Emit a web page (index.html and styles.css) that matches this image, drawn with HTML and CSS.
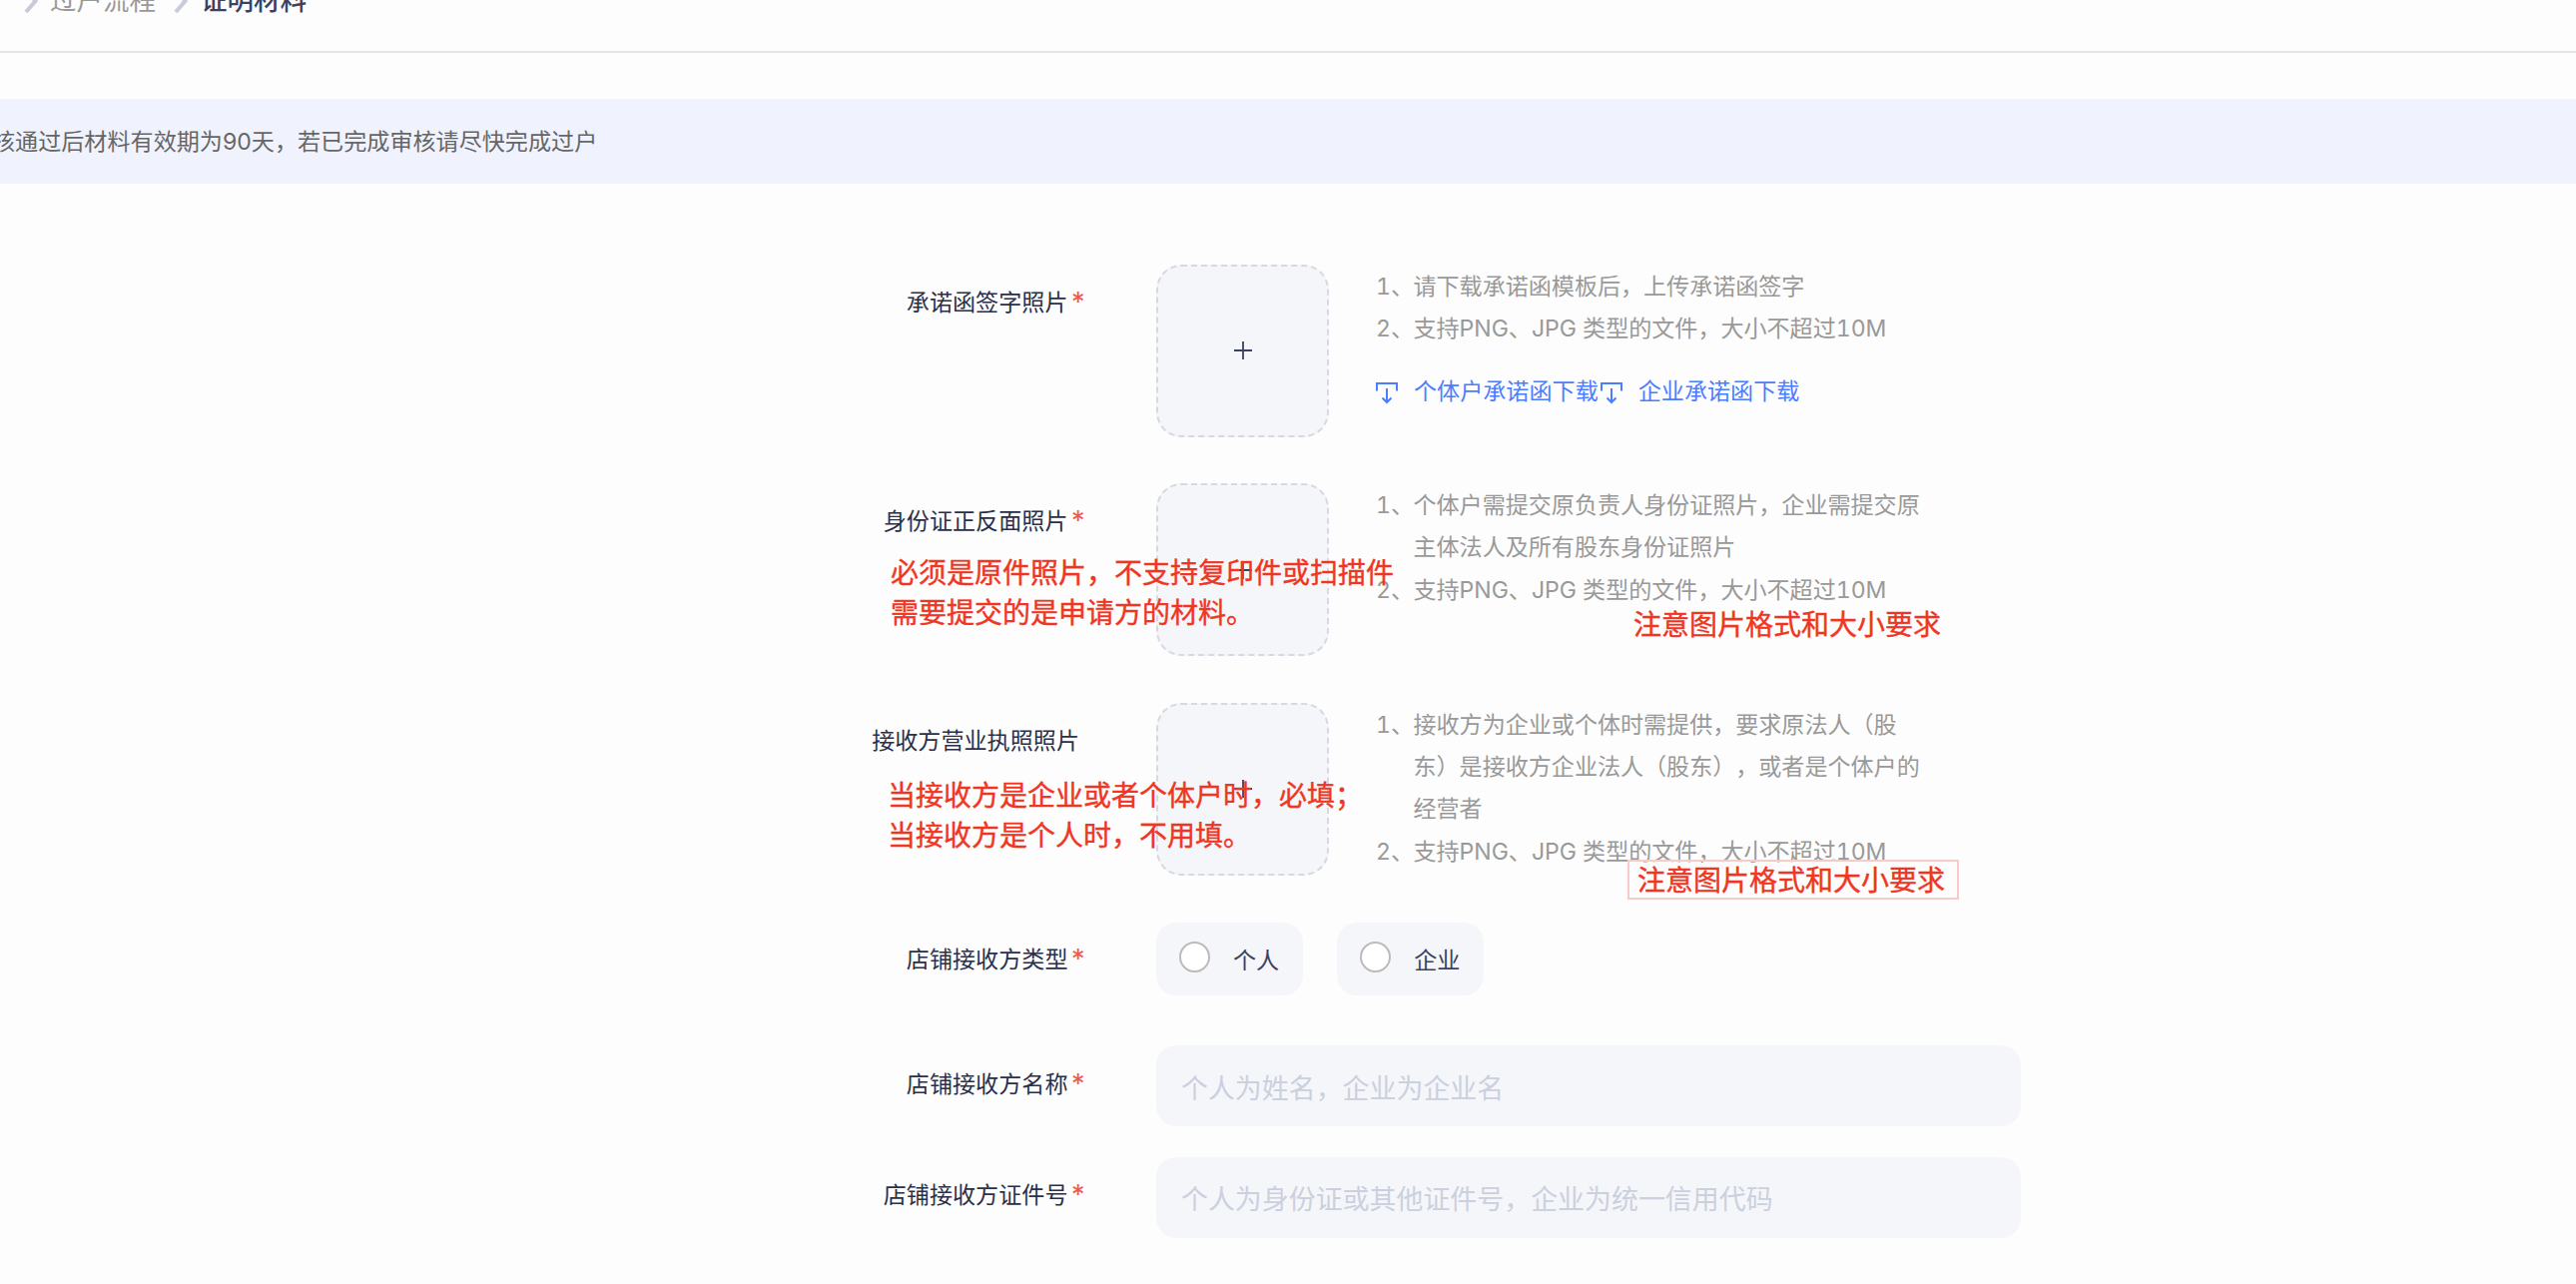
FILE: index.html
```html
<!DOCTYPE html>
<html lang="zh-CN">
<head>
<meta charset="utf-8">
<title>证明材料</title>
<link rel="stylesheet" href="styles.css">
</head>
<body>
<svg class="defs" width="0" height="0" aria-hidden="true">
  <symbol id="plus" viewBox="0 0 18 18"><path d="M9 0v18M0 9h18"/></symbol>
  <symbol id="chevron" viewBox="0 0 14 24"><path d="M2 1l9.500 11L2 23"/></symbol>
  <symbol id="download" viewBox="0 0 22 22"><path d="M1 8.500V1h20v7.500M11 6v14M6.500 15.500L11 20l4.500-4.500"/></symbol>
</svg>

<header class="topbar">
  <nav class="crumbs">
    <svg class="chevron"><use href="#chevron"/></svg>
    <span class="crumb">过户流程</span>
    <svg class="chevron"><use href="#chevron"/></svg>
    <span class="crumb current">证明材料</span>
  </nav>
</header>

<div class="banner"><span>核通过后材料有效期为90天，若已完成审核请尽快完成过户</span></div>

<main class="form">
  <section class="row upload-row">
    <div class="label">承诺函签字照片<i class="req">*</i></div>
    <div class="upload"><svg class="plus"><use href="#plus"/></svg></div>
    <div class="hints">
      <div class="hint"><b>1、</b><span>请下载承诺函模板后，上传承诺函签字</span></div>
      <div class="hint"><b>2、</b><span>支持PNG、JPG 类型的文件，大小不超过10M</span></div>
      <div class="links">
        <a class="link"><svg class="download"><use href="#download"/></svg>个体户承诺函下载</a>
        <a class="link"><svg class="download"><use href="#download"/></svg>企业承诺函下载</a>
      </div>
    </div>
  </section>

  <section class="row upload-row">
    <div class="label">身份证正反面照片<i class="req">*</i></div>
    <div class="upload"><svg class="plus"><use href="#plus"/></svg></div>
    <div class="hints">
      <div class="hint"><b>1、</b><span>个体户需提交原负责人身份证照片，企业需提交原<br>主体法人及所有股东身份证照片</span></div>
      <div class="hint"><b>2、</b><span>支持PNG、JPG 类型的文件，大小不超过10M</span></div>
    </div>
    <p class="note note-original">必须是原件照片，不支持复印件或扫描件<br>需要提交的是申请方的材料。</p>
    <p class="note note-format">注意图片格式和大小要求</p>
  </section>

  <section class="row upload-row">
    <div class="label optional">接收方营业执照照片</div>
    <div class="upload"><svg class="plus"><use href="#plus"/></svg></div>
    <div class="hints">
      <div class="hint"><b>1、</b><span>接收方为企业或个体时需提供，要求原法人（股<br>东）是接收方企业法人（股东），或者是个体户的<br>经营者</span></div>
      <div class="hint"><b>2、</b><span>支持PNG、JPG 类型的文件，大小不超过10M</span></div>
    </div>
    <p class="note note-license">当接收方是企业或者个体户时，必填；<br>当接收方是个人时，不用填。</p>
    <p class="note note-boxed">注意图片格式和大小要求</p>
  </section>

  <section class="row radio-row">
    <div class="label">店铺接收方类型<i class="req">*</i></div>
    <div class="options">
      <label class="option"><span class="dot"></span>个人</label>
      <label class="option"><span class="dot"></span>企业</label>
    </div>
  </section>

  <section class="row input-row">
    <div class="label">店铺接收方名称<i class="req">*</i></div>
    <input class="field" type="text" placeholder="个人为姓名，企业为企业名">
  </section>

  <section class="row input-row">
    <div class="label">店铺接收方证件号<i class="req">*</i></div>
    <input class="field" type="text" placeholder="个人为身份证或其他证件号，企业为统一信用代码">
  </section>
</main>
</body>
</html>
```
FILE: styles.css
```css
* { box-sizing: border-box; }

body {
  margin: 0;
  width: 2580px;
  height: 1286px;
  overflow: hidden;
  background: #fdfdfd;
  color: #2a3049;
  font: 23.1px/42.4px Inter, "Noto Sans CJK SC", sans-serif;
  text-spacing-trim: space-all;
}

svg { fill: none; stroke: currentColor; flex: none; }
.defs { position: absolute; }

/* Breadcrumb bar, scrolled partly out of view */
.topbar {
  display: flow-root;
  height: 53px;
  border-bottom: 2px solid #e5e6ec;
}
.crumbs {
  display: flex;
  align-items: center;
  height: 24px;
  margin-top: -12px;
  padding-left: 24px;
  font-size: 26.5px;
  line-height: 24px;
  color: #999;
}
.crumb { width: 124px; margin-top: -1px; white-space: nowrap; }
.crumbs .crumb:first-of-type { margin-left: 12px; }
.crumbs .current { margin-left: 13px; font-weight: 500; color: #3b4160; }
.chevron { width: 14px; height: 24px; margin-top: 2px; stroke-width: 4; color: #c9ccd6; }

/* Notice strip */
.banner {
  display: flex;
  align-items: center;
  height: 85px;
  margin-top: 46px;
  padding-top: 2px;
  background: #f0f3fe;
  color: #666;
  white-space: nowrap;
}
.banner span { margin-left: -8px; }

.form {
  display: flex;
  flex-direction: column;
  padding-top: 80.500px;
}
.row { position: relative; display: flex; }
.upload-row { height: 219.5px; }
.radio-row { height: 124px; padding-top: .8px; }
.input-row { height: 111.5px; }

.label {
  width: 1158px;
  padding: 17px 71.500px 0 0;
  text-align: right;
  white-space: nowrap;
}
.optional { padding-right: 77px; }
.radio-row .label { padding-top: 16px; }
.input-row .label { padding-top: 17.500px; }
.req {
  display: inline-block;
  width: 14px;
  margin-left: 3px;
  font-size: 27px;
  font-style: normal;
  line-height: 20px;
  vertical-align: -1px;
  color: #f0584a;
}

.upload {
  display: flex;
  align-items: center;
  justify-content: center;
  width: 173px;
  height: 173px;
  border: 2px dashed #d7d9e0;
  border-radius: 25px;
  background: #f5f6f9;
}
.plus { width: 18px; height: 18px; stroke-width: 1.8; color: #3b4160; }

.hints {
  margin-left: 47px;
  padding-top: 1px;
  color: #999;
  white-space: nowrap;
  font-variant-numeric: tabular-nums;
}
.hint { display: flex; }
.hint b { width: 37.500px; font-weight: 400; }
.hint span { letter-spacing: -.04px; }
.links { display: flex; gap: 2px; margin-top: 21px; color: #4c7dff; }
.link { display: flex; align-items: center; }
.download { width: 22px; height: 22px; margin: 2px 16px 0 0; stroke-width: 2; }

.options { display: flex; gap: 34.500px; }
.option {
  display: flex;
  align-items: center;
  width: 146.700px;
  height: 73.500px;
  padding: 3px 0 0 23px;
  border-radius: 20px;
  background: #f5f6f9;
  color: #3b4160;
}
.dot {
  width: 31px;
  height: 31px;
  margin: -8px 23px 0 0;
  border: 2px solid #bbb;
  border-radius: 50%;
  background: #fff;
}

.field {
  width: 866px;
  height: 81px;
  padding: 5px 25px 0;
  border: 0;
  border-radius: 20px;
  background: #f5f6f9;
  font: 26.95px Inter, "Noto Sans CJK SC", sans-serif;
}
.field::placeholder { color: #cbd0df; opacity: 1; }

/* Red annotations laid over the form */
.note {
  position: absolute;
  margin: 0;
  font-size: 28px;
  line-height: 40px;
  color: #f03522;
  -webkit-text-stroke: .4px #f03522;
  white-space: nowrap;
}
.note-original { left: 892px; top: 70px; }
.note-format { left: 1636px; top: 122px; }
.note-license { left: 889px; top: 73px; }
.note-boxed {
  left: 1630px;
  top: 157px;
  width: 332px;
  height: 40px;
  padding-left: 8px;
  border: 2px solid #f9cbc8;
  line-height: 38px;
}
```
